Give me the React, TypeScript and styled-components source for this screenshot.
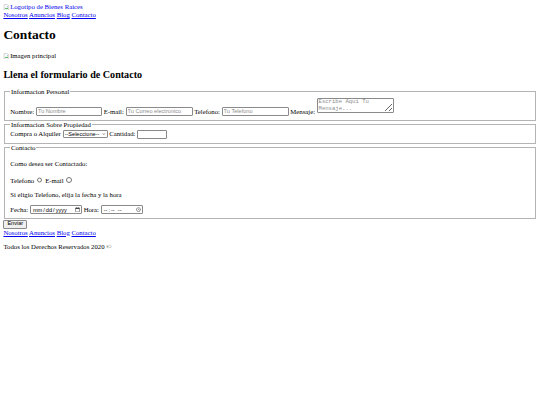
import styled, { createGlobalStyle } from "styled-components";

// the reference is a plain unstyled page shown at 540/1280 of its size,
// so every default browser size below is multiplied by about 0.42
const GlobalStyle = createGlobalStyle`
  body {
    margin: 3.375px;
    font-family: "Liberation Serif", "Times New Roman", serif;
    font-size: 6.75px;
    color: #000;
    background: #fff;
  }
`;

const Link = styled.a`
  color: #0000ee;
  text-decoration: underline;
  text-decoration-thickness: 0.5px;
  text-underline-offset: 1px;
`;

const NavBar = styled.nav`
  display: block;
`;

const BrokenImage = styled.span`
  display: inline-flex;
  align-items: flex-end;
  color: inherit;

  svg {
    width: 6.75px;
    height: 6.75px;
    flex: none;
  }
`;

const Title = styled.h1`
  font-size: 13.5px;
  font-weight: bold;
  margin: 9.05px 0;
`;

const Subtitle = styled.h2`
  font-size: 10.125px;
  font-weight: bold;
  margin: 8.4px 0;
`;

const Hero = styled.div`
  color: #000;
`;

const Fieldset = styled.fieldset`
  margin: 0 0.84px;
  padding: 2.36px 5.06px 4.22px;
  border: 0.84px solid #b4b4b4;
  min-inline-size: min-content;
`;

const Legend = styled.legend`
  padding: 0 0.84px;
`;

const Label = styled.label`
  font-size: 6.75px;
`;

const TextInput = styled.input<{ $width: number; $height?: number }>`
  box-sizing: border-box;
  width: ${(p) => p.$width}px;
  height: ${(p) => p.$height ?? 8.6}px;
  padding: 0 1px;
  border: 0.6px solid #8a8a8a;
  border-radius: 1px;
  font-family: "Liberation Sans", Arial, sans-serif;
  font-size: 5.6px;
  color: #000;
  vertical-align: baseline;

  &::placeholder {
    color: #8d8d8d;
  }

  &::-webkit-calendar-picker-indicator {
    width: 5px;
    height: 5px;
    padding: 0;
    margin: 0;
  }

  &::-webkit-datetime-edit {
    padding: 0;
  }

  &::-webkit-inner-spin-button {
    display: none;
  }
`;

const Message = styled.textarea`
  box-sizing: border-box;
  width: 77px;
  height: 15.6px;
  padding: 0.8px;
  border: 0.6px solid #8a8a8a;
  border-radius: 1px;
  font-family: "Liberation Mono", "Courier New", monospace;
  font-size: 5.6px;
  line-height: 6.3px;
  resize: both;

  &::placeholder {
    color: #8d8d8d;
  }
`;

const SelectWrap = styled.span`
  position: relative;
  display: inline-block;
`;

const Select = styled.select`
  box-sizing: border-box;
  appearance: none;
  width: 45px;
  height: 7.8px;
  padding: 0 6px 0 1px;
  border: 0.6px solid #8a8a8a;
  border-radius: 1px;
  font-family: "Liberation Sans", Arial, sans-serif;
  font-size: 5.6px;
  color: #000;
  background: #fff;
  vertical-align: baseline;
`;

const Chevron = styled.svg`
  position: absolute;
  right: 1.5px;
  top: 50%;
  width: 3.6px;
  height: 3.6px;
  transform: translateY(-50%);
  pointer-events: none;
`;

const Para = styled.p`
  margin: 6.75px 0;
`;

const RadioRow = styled.div`
  padding: 2px 0 1px;
`;

const Radio = styled.input`
  width: 5.2px;
  height: 5.2px;
  margin: 1.6px 1.3px 0 1.2px;
  vertical-align: baseline;
`;

const SubmitButton = styled.input`
  box-sizing: border-box;
  height: 9px;
  padding: 0 3px;
  margin: 0.5px 0 0;
  border: 0.6px solid #8a8a8a;
  border-radius: 1px;
  background: #efefef;
  font-family: "Liberation Sans", Arial, sans-serif;
  font-size: 5.6px;
  color: #000;
  line-height: 1;
`;

const Copyright = styled.p`
  margin: 6.75px 0;
`;

const ImageIcon = () => (
  <svg viewBox="0 0 16 16">
    <path d="M2.5 1.5h8l3 3v10h-11z" fill="#fff" stroke="#9a9a9a" />
    <path d="M4 12l3-4 2 2.5 1.5-1.5 2 3z" fill="#4caf50" />
    <circle cx="10.5" cy="6.5" r="1.3" fill="#5b9bd5" />
  </svg>
);

const Links = () => (
  <NavBar>
    <Link href="#">Nosotros</Link> <Link href="#">Anuncios</Link>{" "}
    <Link href="#">Blog</Link> <Link href="#">Contacto</Link>
  </NavBar>
);

export default function App() {
  return (
    <>
      <GlobalStyle />
      <header>
        <Link href="#">
          <BrokenImage>
            <ImageIcon />
            Logotipo de Bienes Raices
          </BrokenImage>
        </Link>
        <Links />
      </header>

      <main>
        <Title>Contacto</Title>
        <Hero>
          <BrokenImage>
            <ImageIcon />
            Imagen principal
          </BrokenImage>
        </Hero>
        <Subtitle>Llena el formulario de Contacto</Subtitle>

        <form onSubmit={(e) => e.preventDefault()}>
          <Fieldset>
            <Legend>Informacion Personal</Legend>
            <Label htmlFor="nombre">Nombre:</Label>{" "}
            <TextInput id="nombre" $width={66} placeholder="Tu Nombre" />{" "}
            <Label htmlFor="email">E-mail:</Label>{" "}
            <TextInput
              id="email"
              type="email"
              $width={67}
              placeholder="Tu Correo electronico"
            />{" "}
            <Label htmlFor="telefono">Telefono:</Label>{" "}
            <TextInput
              id="telefono"
              type="tel"
              $width={67}
              placeholder="Tu Telefono"
            />{" "}
            <Label htmlFor="mensaje">Mensaje:</Label>{" "}
            <Message id="mensaje" placeholder="Escribe Aqui Tu Mensaje..." />
          </Fieldset>

          <Fieldset>
            <Legend>Informacion Sobre Propiedad</Legend>
            <Label htmlFor="opciones">Compra o Alquiler</Label>{" "}
            <SelectWrap>
              <Select id="opciones" defaultValue="">
                <option value="" disabled>
                  --Seleccione--
                </option>
                <option value="compra">Compra</option>
                <option value="alquiler">Alquiler</option>
              </Select>
              <Chevron viewBox="0 0 10 10">
                <path
                  d="M2 3.5l3 3 3-3"
                  fill="none"
                  stroke="#000"
                  strokeWidth="1.4"
                />
              </Chevron>
            </SelectWrap>{" "}
            <Label htmlFor="cantidad">Cantidad:</Label>{" "}
            <TextInput id="cantidad" type="number" $width={30} />
          </Fieldset>

          <Fieldset>
            <Legend>Contacto</Legend>
            <Para>Como desea ser Contactado:</Para>
            <RadioRow>
              <Label htmlFor="contactar-telefono">Telefono</Label>{" "}
              <Radio type="radio" name="contacto" id="contactar-telefono" />{" "}
              <Label htmlFor="contactar-email">E-mail</Label>{" "}
              <Radio type="radio" name="contacto" id="contactar-email" />
            </RadioRow>
            <Para>Si eligio Telefono, elija la fecha y la hora</Para>
            <div>
              <Label htmlFor="fecha">Fecha:</Label>{" "}
              <TextInput id="fecha" type="date" $width={52} $height={9} />{" "}
              <Label htmlFor="hora">Hora:</Label>{" "}
              <TextInput id="hora" type="time" $width={42} $height={9} />
            </div>
          </Fieldset>

          <SubmitButton type="submit" value="Enviar" />
        </form>
      </main>

      <footer>
        <Links />
        <Copyright>Todos los Derechos Reservados 2020 &copy;</Copyright>
      </footer>
    </>
  );
}
